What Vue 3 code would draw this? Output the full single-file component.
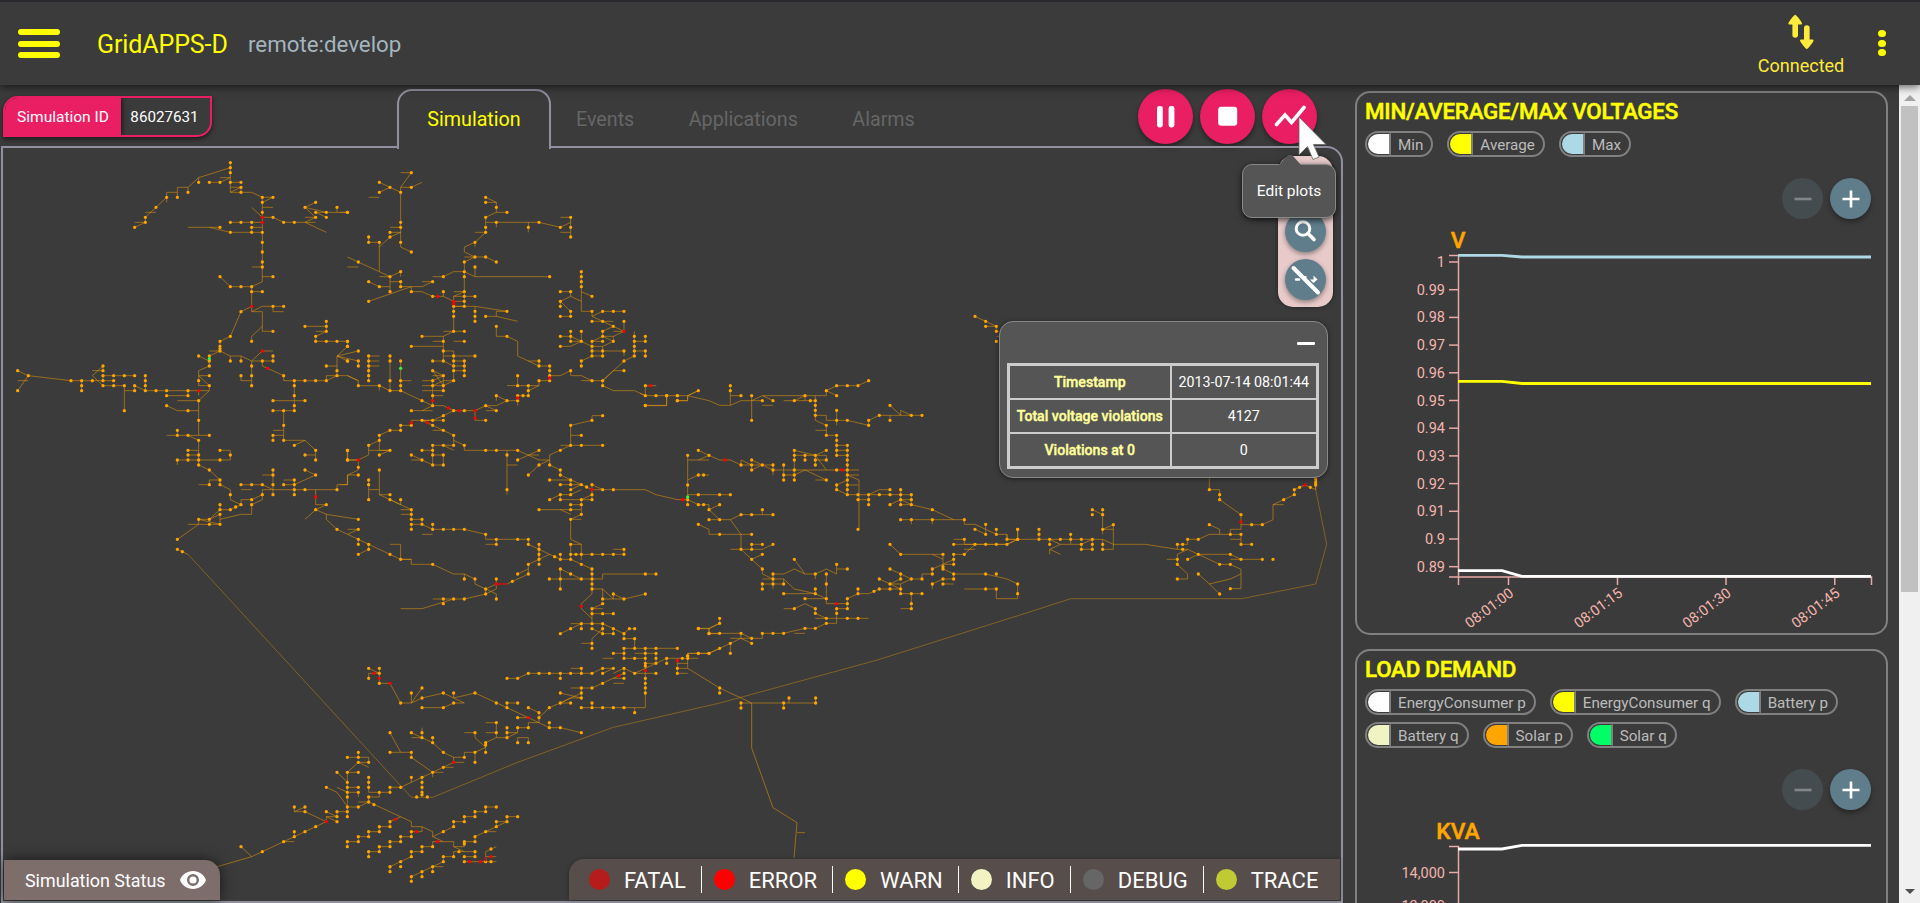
<script setup>
// Feeder topology. Each section has its own origin on the canvas and is stored at three units per pixel.
// "wires" is path data; node rows are written as "y:x,x,x".
const sections = [
  {
    id: 'west', x: 0, y: 140,
    wires: 'M691 68V157 M691 83L596 113V127 M596 113L564 142V157 M564 142H532V172 M532 157H500V187 M500 172L436 232V247L404 262 M436 217H468 M404 247H436 M628 127H660L691 113H660 M691 127H723 M691 157L723 142 M691 157H755L787 172V425 M691 142H723V157 M787 172H819L787 187 M787 202H819 M755 202L787 232H819L851 247H947 M691 247H787 M564 262H660 M628 262L691 277H787 M755 262H787 M755 262V277 M915 247L979 277 M915 202L947 187 M915 202L947 232L915 247 M915 202L979 217H1043 M947 217H979 M1011 202V217 M947 217L979 232 M915 232H947 M755 381H787 M787 410H819 M787 425L755 440H691L660 410 M755 440V515H787V574H819 M755 455H787 M755 515L787 499H851 M819 499V515H851 M755 499L723 515L691 589L660 604V633 M787 559L755 589V604 M628 633H660L691 648H723L755 663L787 633H819 M660 633L628 648V678L596 692V707L628 737V752 M596 648L628 663 M691 648V663 M723 648V663 M755 663V737 M755 663H819V648 M787 663V678L851 707V722H979L1011 707 M723 707V722H755 M596 722V707H628 M596 722V737H628 M596 752V767 M628 752L596 782V886 M53 692L85 707L53 752 M53 722H85 M85 707L213 722H341 M245 722V752 M309 678L277 707L309 737H373V812 M277 692H309V678 M309 707H404 M309 707V722 M373 752H404V737L436 752V707 M436 752H628 M500 767H564V752 M532 782H596 M500 797L532 812H596 M500 886H628 M532 871V886 M564 886L596 901V975 M564 931H596 M564 945H596 M532 975V960H691V931H660 M596 975L628 990L660 1020V1034L691 1049V1079L723 1094 M628 1020H660 M628 1020V1034H596 M723 1034H787L819 1049V990 M787 1005H819 M723 1049H755 M723 1094V1079H755L787 1064V1049H1011V1034H1043V1005L1075 990 M755 1094L787 1079V1064 M819 1049V1064 M851 1034H883V1064 M851 1020H883V1034L947 1005L915 990 M755 1094V1123H723L660 1138 M660 1094V1109H691L723 1094 M660 1109L628 1138 M596 1153V1138H628L660 1123 M564 1153H660V1123 M596 1153L532 1198 M596 1138L660 1153 M532 1228L547 1235L564 1243 M915 559H979V544 M947 574H979V559 M979 574L947 589V604H1043V619L1011 648V707H1043L1075 722 M979 678H1011 M979 722V707H1011 M819 782H915 M883 722V812H819 M851 812V901H915L947 931V960 M819 871H851 M819 901V886H851 M883 916L915 901 M915 945H947 M947 1049V1094H979 M947 1109L979 1094 M915 1138L947 1109L979 1123L1075 1138 M979 1123V1138L1011 1168L1075 1198 M1011 648L1075 633 M1011 648L1043 663 M1011 648L1075 663V678 M1043 1168H1075L1043 1183 M1043 931V960H1075',
    warn: '68:691;83:691;98:691;127:596,628,660,691,723;142:723;157:564,723;172:500,532,787,819;187:787,947;202:468,915,1011;217:787,947,979,1043;232:436,819,947,979;247:436,691,723,755,851,883;262:404,660,755;277:691,755,787;307:787;336:787;366:787;381:787;410:660,819;440:691,723,755;455:755,787;499:819,851;515:723;544:979;559:915,979;574:819,979;589:691,947;604:660,755,947,979,1011,1043;619:660,1043;626:660;633:660;648:596,628,819;663:628,691,723,787,819,1043;678:628,755,309,979;692:53,309,1011;707:85,309,341,373,404,436,628,723,755,851,1011;722:213,245,277,309,341,436,596,883,915,947,979;737:245,309,341,373,404,436,628,755,883;752:53,245,404,436,468,500,564;767:500,564,883;782:596,819,915;797:500,883;812:373,564,819,851,883;841:596;856:851;871:532;886:532,564,628,819;901:596,819,851;916:883;931:564,660,947,1043;945:564,596,691,915;960:532,564,596,660,947,1043;975:596;990:628,819,915;1005:819,947;1020:660,883;1034:628,660,723,755,787,819,851,883;1049:883,915,1011;1064:691,787,819,883;1079:755;1094:660,723,755,979;1101:707;1109:660,691,947;1123:660;1138:596,628;1153:628,660;1168:1011;1198:532;1228:532;1235:547',
    error: '232:787;247:787;499:755;633:787;685:803;752:596;1071:947',
    ok: '656:628'
  },
  {
    id: 'north', x: 340, y: 140,
    wires: 'M0 217H22 M182 98H214L182 142V321L214 336 M182 142H214L246 127 M118 127L182 157 M118 157L150 142 M86 172H118 M150 262H182 M150 277H182 M150 291L182 277 M118 321L150 291 M86 291V307H118V395L150 410V455 M22 351L118 395 M22 381H55 M118 410H150L182 395V410 M150 425H182V440H246L278 425H246 M86 425L118 440H150 M214 440V455H246L278 469H310V455 M86 484L214 440 M278 410H310L341 395H373 M310 469L341 484V574 M341 469H405 M341 484V469 M341 455H373 M341 469L373 455 M341 484H373V366 M341 499H405L501 514H469V529H437 M405 499V544 M341 499H373V484 M469 529L533 544 M437 172L469 187V217H501 M437 187H469 M469 217L437 232V277L405 307L373 321V336L405 351H373 M405 277H437 M437 247H597L661 262L692 247 M469 247V262 M565 247V277 M661 232H692V291 M661 277H692 M405 307V321 M373 366L405 351H437L469 366 M373 395L405 410H629 M405 381V410 M469 559V589H501L533 604V648L597 678 M565 663H597V678H629V722 M629 707H661L692 692V707H724L756 722 M724 722H788V737L820 752H884L916 767 M629 722H597V737L565 752V767H533 M501 737H597 M533 707V737 M533 767V797 M533 782H501L469 797H437L405 812V841H437 M501 782L469 767V782 M437 797L469 812H437 M565 737V752 M341 812H405 M278 797H310L341 812L310 827L278 841H214V856H182V871H150L118 886V931H150 M246 812L278 797 M214 812H278 M246 782L278 797V722L310 707H278 M182 752L246 782 M182 663V752H150V648 M182 722H214 M86 648V722 M86 648H118 M86 663H118 M86 678H118 M22 707L55 722V737H118V752 M118 737L150 752 M310 574H373 M246 589H310L341 574 M310 589V663 M278 604H310 M341 604H373 M214 619H310 M310 633H341V722L310 737 M310 648H341 M278 663H310L341 678H373V663 M341 648H405 M341 663H373V707 M341 692H373 M278 692L310 707V752 M278 692L310 737 M278 737L310 722H341 M246 722H278 M246 752H310 M278 767H310 M246 737H310 M246 841H310 M246 841L278 856L310 871L341 886V916H278V975H310V945 M278 871H310 M310 916L341 931 M341 901L373 916V931H533 M246 931H278 M214 945L246 960L278 975 M214 960H246 M278 945H310 M501 931V1064 M501 975H533 M533 931L597 960H629 M565 945H597 M533 960L597 931 M565 1005L597 975L629 960V975L661 990V1005L724 1034 M629 960V945L692 916V856L756 841V827H788 M692 886H724 M661 916H788 M118 945L150 931H86V916L118 901 M86 931V945L55 960V990 M22 931V960H55 M0 1034H22V1005H55 M629 1020H692V1034 M661 1034H692L724 1034 M724 1034L692 1049 M724 1034L756 1049V1079H661V1064H692L724 1049 M629 1079L661 1064 M756 1049V1034L788 1049H916L948 1064L1012 1079H1043 M756 1049H788 M724 1079L756 1064 M692 1094H724V1079 M597 1109H724 M661 1109L692 1123 M724 1094V1123L692 1138V1198L724 1213V1260 M692 1138H724 M692 1213H724 M692 1213V1260 M692 1243H852V1228H820 M118 990V1064L150 1079L182 1094V1079 M118 1064H150 M86 1020V1079 M86 1049H118 M150 1079L214 1109H182 M214 1109V1138H246V1153 M182 1123H214 M214 1168V1153H246L278 1168V1153 M278 1168H373L437 1183V1198H565V1213 M246 1183H278 M437 1213H469V1198 M565 1213L644 1250L661 1257 M597 1213V1260 M55 1198L86 1213L150 1243L182 1258H214 M55 1198V1213 M86 1213V1228L55 1243 M150 1213H182V1258 M724 395V514H756V529L788 514H852 M724 455L756 469 M661 455H692V469L661 484V499 M692 469L724 484 M661 484L692 514V529H661 M756 529L852 574L820 589H788 M756 544H820 M852 544V574H820 M788 574L820 559 M788 574V589L820 604V589 M756 604L788 589 M820 604L788 619V648 M661 589H692V574 M692 589L724 604V574 M692 604V589 M692 604H724 M661 619H692L724 604L756 619V604H788 M756 619V648H788 M756 619H788 M756 633H852V648 M724 663L756 648 M724 678V663 M883 574V648L852 663L788 722 M788 722L820 692H852 M883 604H916V589 M883 633H916V648 M916 767V737H949 M916 767H1043L1075 752 M980 767V797H916 M1012 782H1043V767',
    warn: '98:214;127:118;142:150,214;157:118,182;172:437;187:437;202:469;217:22,501;232:437,692;247:182,469,597;262:182,437,565,661,692;277:150,437;291:86,150,692;307:86,118,182,405;336:214;351:405,437;366:55,373,469;381:405;395:182,373,724;410:150,310,373,629,724;425:86,182,278,724;440:118,182,724;455:150,214,310,373,661,692;469:278,373,405,756;484:86,373,661;499:341,373,661;514:341,405,501,692,756,788,820,852;529:341,405,437,661,692;544:405,756,788,852;559:469,820;574:341,373,692,724,788;589:246,501,661,692,788,883,916;604:22,310,373,692,724,756,788,820,883,916;619:22,214,661,756,883;633:55,310,756,788,852,883,916;648:86,150,341,405,756,788,883,916;663:22,55,86,150,182,278,310,341,373,597,724,852;678:55,86,341,373,597,629,724;692:86,278,341,373,629,692,852;707:86,310,373,533,629;722:86,150,182,278,341,597,629,756,788;737:55,118,182,278,310,533,565,788,916;752:150,182,310,565;767:278,469,533,549,565,916,948,980,1012;782:246,501,533,1012;797:278,437,916;812:214,341,373,469;827:310,788;841:246,278,310,437,756;856:182,214,278,692;871:150,182,310;886:118,341,724;901:118;916:86,278,310,341,373,692,724,788;931:22,150,246,278,437,469,533,597,661;945:118,214,278,310,501;960:22,246,533;975:278,310,597,629;982:55;990:118,661;1005:55,565,661;1020:86,629,692;1034:86,661,692,724,756;1041:740;1049:501,692,788,820;1064:150,661,692,756;1079:86,150,182,629,661,724,756;1094:692,724;1109:214,597,692;1123:214,724;1138:55,214,246,692;1153:214,246,278;1168:55,214,278,310,341,373;1183:437;1198:55,469,533,565;1213:55,86,469,597,692,565;1228:86,597,852;1243:55,150,597,661,692,708,724,756,788,820,852;1250:644',
    error: '469:293;484:341;491:341;574:852;714:629;737:932;774:533;782:278;804:325;812:357,405;834:405;848:214,262;960:55;1049:756;1079:1028',
    ok: '685:182'
  },
  {
    id: 'center', x: 640, y: 360,
    wires: 'M0 100L16 107 M143 107V122 M16 136H80V107 M112 122H143 M143 107L207 122L239 136H271V77 M143 107L175 92 M271 107H303 M271 136L303 122H367 M335 107V181 M335 122L367 107H559V92L590 77H654L686 62 M367 107L399 122 M367 136H399 M431 122H526 M463 122L495 107V122 M559 92L590 107 M526 107V181L559 196V226H590 M526 166H559V181H622L686 196V181L718 166H846 M590 151V196 M526 211H559 M750 136L782 166V151L814 166 M750 166V181 M590 226V286H622 M590 256H622V404 M590 271H622 M143 286V434 M143 300H207 M175 271L207 286L239 300H271L303 315V300 M175 300L207 286 M143 360L175 345H207 M303 315H399V330H590 M303 300L335 315 M335 300L367 315L335 330V315 M367 315L399 330V345 M431 315V360 M431 345H463 M463 271V360 M463 271L526 286H559V300 M463 286H526V300H559 M495 286V300 M526 286L559 271 M526 286L559 330 M526 315V300 M463 345L495 330L559 360H526 M590 330H657 M622 345L657 360V508 M622 345H657 M590 375L622 360 M622 375H654 M590 375V389L622 404H814V434 M686 404L718 389H750 M782 389V434H814 M654 419H686V404 M686 419V434 M750 434L782 419H814 M814 434L877 449L941 479 M782 419L814 434 M782 479H973V493H1005L1069 523H1101V538H1133V508 M814 479V493 M877 479V493 M1005 508L1037 523V493 M1069 508V523 M941 538H973V553 M941 553H1101L1133 538 M1005 553L973 583H941V613H909 M973 568H1005 M143 404H271 M143 419L175 434H207V449L239 434 M207 449L239 479H207 M239 479H271L303 464H399 M367 449V464 M271 479L303 523V568L335 598L367 583 M175 493L207 508V523H335 M271 568H367L399 553 M335 568V553H367 M335 598L367 627V642L399 657H431L463 687L526 701H431 M399 642H431L463 627L495 642H526V657 M463 598L495 642 M526 642L559 627L590 642V613 M590 627H622 M367 657H399 M399 642V687 M367 687V672H431V657 M559 642V731H622V716L654 701H686L718 687H782V701H846 M526 687V701L559 716H495 M654 687V701 M590 746H622V731 M590 746V790H559L526 805H495L431 820H367V835H271 M431 746H463L495 731L526 746V760L559 775 M526 775H686 M463 820H495 M750 553L782 583H909V627L941 642H1037L1101 657L1133 672V716H1069V687H973 M877 583L909 598 M909 613L941 598 M846 657V642H877V627L909 613 M750 627L782 642V657L750 672L718 657 M750 672H782L814 657H846 M750 672L782 687V672 M782 642L814 657 M877 687V672L909 657H941V642 M909 672H941 M814 701V746H782 M175 805H207V820H303V835 M207 805L239 790V775 M303 820L335 835 M303 835L335 850 M303 835L271 850V880 M271 850L207 880H143V900',
    warn: '62:686;77:271,590,622,654;92:175,271,559;107:80,112,303,335,495,590;122:112,367,399,463,511,526;136:16,526,750;151:526,590;166:526,718,814,846;181:335,590,622,686,750;196:559,686;226:559,590;241:590;256:590,622;271:175,463,559,590,622;286:143,207,463,495,526,590,622;300:335,463,495,526,559,622;315:303,335,367,399,431,526,622;330:335,399,463,590,622;345:175,191,431,463,622;360:431,463,559,622;375:143,590,622;389:590,622,750,782;404:175,239,271,622,654,686,718,750,782,814;419:143,654,686,782,814;434:143,175,191,239,686,750,782,814;449:207,367,877;464:303,335,399;479:207,239,782,814,877,973;493:175,1037;508:654,1005,1069,1133;523:239,335,1037,1069;538:973,1101,1133;553:335,367,399,750,941,1005,1037,1069,1101;568:303,335;583:367,782,909,941,973;598:335,463,941;613:590,941;620:909;627:367,622,750,877,909;642:399,526,559,782,877,941,1037,1069;657:399,718,782,814,846,909,941;672:367,399,431,559,750,877,909,1133;687:367,526,654,718,750,782,1037,1069;694:702;701:431,526,654,782,814,846,1133;716:495,559,622;731:622,814;746:463,526,590,622,814;760:526,590;775:239,559,622,654;790:239,559;805:175,495,526;820:207,239,303,367,399,431;835:335;850:271,335;865:239;880:175,207,271;888:143',
    error: '300:255;330:606;419:127;731:590',
    ok: '411:143'
  },
  {
    id: 'east', x: 960, y: 460,
    wires: 'M141 238V223 M141 238H173 M13 253H141L173 238H428L460 253H556L652 268 M173 208V238 M237 208V238 M332 223V253 M269 238V253 M269 238L301 253L269 268V283 M269 268L301 283 M301 253H364L397 238V268H364V253 M397 149L428 164V149 M428 164V223 M428 208L460 194V268H428V238 M428 208H460 M748 55V89H779V119L843 164V208H811V223H843 M843 194H907L939 179V134H971 M939 134L1003 104V89L1035 75L1067 89V57 M748 194L779 208V223H811 M779 223H748L715 238H683V253H652V268H683L779 313H811L843 328V386H811 M843 342L811 357L748 372L715 342 M748 372L779 402 M811 238H843V223 M843 238V253H875 M652 298V283L683 268 M620 298H652V313L683 342V357H652 M683 298L715 283H811L843 298H907 M811 298H843',
    warn: '57:1067;64:1067;69:1067;75:1067;82:1019,1051;89:748,1003;104:779,1003;119:779,971;149:397,428;164:397,428,843;194:460,748,875,907;208:173,237,428;223:237,332,811,843;238:173,237,269,301,332,364,397,683,715;253:269,364,397,428,652,668,843,875;268:364,397,428,668;283:715,811;298:652,683,843,907,939;313:652,779,811;342:715;357:652;386:811;402:779',
    error: '75:1035;186:843', ok: ''
  },
  {
    id: 'spur', x: 960, y: 140,
    wires: 'M45 529L109 559V574H117 M77 559H109 M109 589H117',
    warn: '529:45;544:77;559:77,109;574:109;604:109', error: '', ok: ''
  },
  {
    id: 'south', x: 340, y: 540,
    wires: 'M661 43V58 M661 58H692 M692 58L756 87V162L724 191V206L756 236 M756 206V251 M597 13V73 M182 58H214V73H278L341 102H373V117 M373 102L405 117V132L437 147L469 162V177 M437 162L469 147V117 M437 147V162L373 177H278 M341 177L246 206H182 M437 147L469 132 M501 132L565 102V73L597 58L629 43 M533 102L565 87 M661 87V147 M661 87L724 117 M628 117H788V102H948 M756 147H788L820 177V162L852 177L916 162 M788 147V177H852 M788 191L756 206H788 M756 221H820 M661 281L724 251H788L788 266L756 296V325 M692 251H724V266 M724 310H756 M756 266L788 281H820V266L788 251 M820 266L852 281L868 266H884 M788 266V281 M852 281V296H884V325 M852 325H1012 M820 340H852V325 M852 340V355H916 M884 340H948V370H916 M788 355H820 M916 385L980 355H1043 M980 355V370 M1012 355V400H1043 M1012 370H1043 M1012 385H1043 M1043 340V385L1139 444 M1043 340H1107L1139 325 M1043 355H1075 M1075 266H1107V281H1139 M1107 266L1139 250 M501 415H533L565 400H756L788 385H820L788 400 M692 385H724V400 M661 400V415 M820 400L852 385L884 400H948 M852 385V400 M597 548V533L628 503L661 489L692 474H724V444H756L852 400 M820 415H852 M820 430H852 M692 444H724 M724 459L661 489H692 M724 474L661 459 M916 325V503H724 M884 400L916 385 M756 489V503 M884 503V518 M86 385L118 400V385 M86 415V400H118V430H150L182 489H214V459 M214 489L246 444 M214 489L246 474L310 459L341 474L405 459L501 503L565 533L628 563H661L724 578 M341 459V474L373 489H341L310 503H246 M501 503V489H533 M565 503L597 518V533 M533 533H565 M565 548H597 M628 563V548 M437 548H469V593L437 608V637 M437 578H469 M469 593H501V563 M501 578H533V563H565V548 M501 593L533 578 M533 608V593H565V608 M373 578H405V593L437 622L405 637V667 M405 637H373V652H341V667L278 697 M341 667H373 M246 563V593H214 M214 578L278 608L310 637L341 652 M278 593V608 M150 578L182 637 M150 637H214V652L278 697V712 M278 697H310 M310 682H341 M278 697L182 742H150V757H86 M214 712V727 M246 712V771 M118 757V771H86V786H55 M22 697H55 M86 712V757 M22 697V830 M55 667L22 697 M55 637V652 M22 652H86V667H55L86 682 M22 742H55 M22 757H55V771 M22 801H55L86 786L214 845V860H246V875 M246 860L278 875V890L310 905H341V920L373 935 M22 920V905H55V890H86V875H118V860H150V845L182 830 M86 950V935H118V920H150V905H182V890H214V875H246 M150 995V980L214 950V935H246V920H278V905H310 M278 890L341 860V845H373V830H405V815H437V801H469 M214 1024V1010L310 965V950H341V935H405V950H373 M246 1010V995 M278 995V980H310 M341 920H373V905H405V890L501 845V830H533 M469 860V845H501 M437 875H469 M373 965H469 M437 965V935L469 920 M437 950H469',
    warn: '58:182,597,661,692;73:278,565,597,724;87:661,756;102:533,565,692,756,916,948;117:373,405,469,628,661,724,756;124:517;132:756;147:437,661,756;162:437,820,916;177:310,341,373,469,788,852;191:310,788;206:756;221:756,788,820;251:724,756,788;266:692,724,756,788,820,868,884,1075;281:661,788,820,852,1107;296:852,884;310:756;325:756,852,884,916,948,1012;340:820,852,916,948,1075,1107;348:1043;355:852,884,916,948,980,1027,1043;370:916,948,980;378:916;385:86,118,724,788,820,852,1012;400:118,565,597,628,661,692,724,756,788,852,884,948,1012;415:86,501,533,661,852,916;430:118,788,916;444:246,724,756,916;459:214,310,341,405,661,724,916;474:246,724;489:182,341,469,501,533,661,692,756;503:246,310,501,565,628,724,756,788,820,852;518:597,884;533:533,597;548:469,628;563:501,533,565,628,661;578:150,214,246,405,469,501,724;593:246,278,501;608:278,437,533,565;615:437;637:55,150,214,310,405,437;652:22,55,214,373;667:55,86,405;682:310;697:22,55,278;712:86,214,246;727:22,86,246;742:22,55,86,150,182,246;757:22,55,118,150,246;764:246;771:22,86,230,262;786:86;794:102;801:22,55,437,469;815:22,405,437;830:22,373,405,501,533;845:150,341,373,469,501;860:118,150,341,469;875:86,118,214,310,437;890:55,86,182,214,405;905:22,55,150,182,373,405;912:373;920:22,118,150,246,278;927:453;935:86,118,214,246,357,405;950:86,214,310,341,373,405;965:182,310,373,437,453;980:150,182,278;995:150,246,278;1010:214,246;1024:214',
    error: '132:469;199:724;362:1012;392:916;400:102;407:836;415:118;430:150;533:565;667:341;838:166;875:230;905:293;950:453;965:389,421', ok: ''
  },
  {
    id: 'southwest', x: 0, y: 540,
    wires: 'M1011 697L1043 727 M979 742L1011 757L1043 801 M1011 742L1043 757 M1011 830V815H1043 M979 815L1011 830H979V845L755 950L565 1005 M755 950L723 920 M979 845L915 815H883V801 M883 815L915 801 M883 875V890 M851 905H883 M979 830L1011 845',
    warn: '697:1011;742:979;801:883,915;815:915,979,1011;830:1011;845:1011;860:947;875:883,915;890:883;905:851;920:723;935:787',
    error: '845:979', ok: ''
  },
  {
    id: 'southeast', x: 700, y: 660,
    wires: 'M59 84L123 114L155 129V264L219 443L291 488L282 594 M59 84V99 M123 129H347V114 M123 144V129 M251 129V144 M267 114V129 M291 518H315',
    warn: '84:59;99:59;129:123,251,347;144:123,251;114:267,347', error: '', ok: ''
  }
]
const trunk = 'M188 554.3L411.3 797.3M432.7 797.3L517.7 762.3L613.3 727.3L720 703L877.3 660L1020 615L1070.7 598.7H1241.7L1315.7 584L1326.7 544.3L1315.7 489.7V479 M411.3 797.3H432.7'

function dots(rows) {
  if (!rows) return ''
  return rows.split(';').map(row => {
    const [y, xs] = row.split(':')
    return xs.split(',').map(x => `M${x} ${y}h.01`).join('')
  }).join('')
}

const levels = [
  { name: 'FATAL', color: '#b71c1c' }, { name: 'ERROR', color: '#ff0000' },
  { name: 'WARN', color: '#ffff00' }, { name: 'INFO', color: '#f0f4c3' },
  { name: 'DEBUG', color: '#666666' }, { name: 'TRACE', color: '#c0ca33' }
]
const tabs = ['Events', 'Applications', 'Alarms']
const plots = [
  {
    title: 'MIN/AVERAGE/MAX VOLTAGES', unit: 'V', height: 544,
    series: [{ name: 'Min', color: '#ffffff' }, { name: 'Average', color: '#ffff00' }, { name: 'Max', color: '#add8e6' }],
    ticks: ['1', '0.99', '0.98', '0.97', '0.96', '0.95', '0.94', '0.93', '0.92', '0.91', '0.9', '0.89'].map((label, i) => ({ label, y: 38 + i * 27.7 })),
    bottom: 353,
    times: [{ label: '08:01:00', x: 151.5 }, { label: '08:01:15', x: 260.5 }, { label: '08:01:30', x: 369 }, { label: '08:01:45', x: 477.8 }],
    lines: [
      { color: '#add8e6', d: 'M101 31.3H145L165 33H514' },
      { color: '#ffff00', d: 'M101 157.3H145L165 159.5H514' },
      { color: '#ffffff', d: 'M101 346.7H145L165 352.3H514' }
    ]
  },
  {
    title: 'LOAD DEMAND', unit: 'KVA', height: 544,
    series: [{ name: 'EnergyConsumer p', color: '#ffffff' }, { name: 'EnergyConsumer q', color: '#ffff00' }, { name: 'Battery p', color: '#add8e6' }, { name: 'Battery q', color: '#f0f4c3' }, { name: 'Solar p', color: '#ffa500' }, { name: 'Solar q', color: '#00ff66' }],
    ticks: [{ label: '14,000', y: 57.5 }, { label: '13,000', y: 91 }],
    bottom: 353, times: [],
    lines: [{ color: '#ffffff', d: 'M101 34H145L165 30.4H514' }]
  }
]
</script>

<template>
  <div class="app">
    <header class="header">
      <div class="burger"><i></i><i></i><i></i></div>
      <div class="brand">GridAPPS-D</div>
      <div class="host">remote:develop</div>
      <div class="connection">
        <svg width="26" height="36" viewBox="0 0 26 36">
          <path d="M7.2 7V21M18.8 14V28" stroke="#ffeb3b" stroke-width="5.6" stroke-linecap="round" />
          <path d="M7.2 0.8C8.2 0.8 14 8 14 9.4C14 10.3 13.4 10.6 12.6 10.6H1.8C1 10.6 0.4 10.3 0.4 9.4C0.4 8 6.2 0.8 7.2 0.8ZM18.8 35.2C19.8 35.2 25.6 28 25.6 26.6C25.6 25.7 25 25.4 24.2 25.4H13.4C12.6 25.4 12 25.7 12 26.6C12 28 17.8 35.2 18.8 35.2Z" fill="#ffeb3b" />
        </svg>
        <span>Connected</span>
      </div>
      <div class="dots"><i></i><i></i><i></i></div>
    </header>

    <main class="body">
      <section class="left">
        <div class="bar">
          <div class="simid"><b>Simulation ID</b><span>86027631</span></div>
          <nav class="tabs">
            <div class="tab active">Simulation</div>
            <div v-for="t in tabs" :key="t" class="tab">{{ t }}</div>
          </nav>
          <div class="controls">
            <button class="fab"><svg width="24" height="24" viewBox="0 0 24 24"><rect x="3" y="1" width="5.8" height="21.5" rx="2.4" fill="#fff" /><rect x="14.6" y="1" width="5.8" height="21.5" rx="2.4" fill="#fff" /></svg></button>
            <button class="fab"><svg width="24" height="24" viewBox="0 0 24 24"><rect x="2.2" y="1.8" width="19" height="19" rx="3" fill="#fff" /></svg></button>
            <button class="fab"><svg width="34" height="24" viewBox="0 0 34 24"><path d="M3.5 19.5L12 10L18.5 17.5L31 2.5" fill="none" stroke="#fff" stroke-width="3.6" stroke-linecap="round" stroke-linejoin="miter" /></svg></button>
          </div>
        </div>

        <div class="stage">
          <svg class="network" width="1339" height="753" viewBox="3 148 1339 753">
            <path class="wire" :d="trunk" />
            <g v-for="s in sections" :key="s.id" :transform="`translate(${s.x} ${s.y}) scale(.33333)`">
              <path class="wire thick" :d="s.wires" />
              <path class="node" :d="dots(s.warn)" stroke="#ffa500" />
              <path class="node" :d="dots(s.error)" stroke="#ff0000" />
              <path class="node" :d="dots(s.ok)" stroke="#3cf03c" />
            </g>
            <path d="M496.3 584H507.5M485.7 861.5V857" stroke="#d01010" stroke-width="1.6" />
          </svg>

          <div class="toolbox">
            <span class="tool"><svg width="41" height="41" viewBox="0 0 41 41"><circle cx="18" cy="17.5" r="6.8" fill="none" stroke="#fff" stroke-width="3" /><path d="M23 22.5L29 28.5" stroke="#fff" stroke-width="3.6" stroke-linecap="round" /></svg></span>
            <span class="tool"><svg width="41" height="41" viewBox="0 0 41 41"><path d="M11 20.500H14M18 18.300H20.500" stroke="#fff" stroke-width="2.400" stroke-linecap="round" /><path d="M28.500 16.500L32.500 20.500L28.500 24L25 20.500H28.500Z" fill="#fff" /><path d="M8.500 9L33 33.500" stroke="#fff" stroke-width="4" stroke-linecap="round" /></svg></span>
          </div>

          <div class="tooltip">Edit plots
            <svg class="caret" width="24" height="13" viewBox="0 0 24 13"><path d="M0 11.5C3 10 7 3 10 1.2Q12 .2 14 1.2C17 3 21 10 24 11.5V13H0Z" fill="#555" /></svg>
          </div>

          <div class="info">
            <div class="min"></div>
            <table>
              <tbody>
                <tr><th>Timestamp</th><td>2013-07-14 08:01:44</td></tr>
                <tr><th>Total voltage violations</th><td>4127</td></tr>
                <tr><th>Violations at 0</th><td>0</td></tr>
              </tbody>
            </table>
          </div>

          <div class="status">Simulation Status
            <svg width="26" height="18" viewBox="0 0 26 18"><path fill-rule="evenodd" d="M13 0C7 0 2 3.7 0 9c2 5.300 7 9 13 9s11-3.700 13-9C24 3.700 19 0 13 0zm0 15a6 6 0 1 1 0-12 6 6 0 0 1 0 12z" fill="#fff" /><circle cx="13" cy="9" r="3.600" fill="#fff" /></svg>
          </div>
          <div class="legend">
            <div v-for="l in levels" :key="l.name" class="level"><i :style="{ background: l.color }"></i><span>{{ l.name }}</span></div>
          </div>
        </div>

        <svg class="cursor" width="32" height="46" viewBox="0 0 32 46"><path d="M1 1V39L9.500 30.500L15 43.500L21 41L15.500 28.500H28Z" fill="#fff" stroke="#666" stroke-width=".8" /></svg>
      </section>

      <aside class="plots">
        <article v-for="p in plots" :key="p.title" class="card" :style="{ height: p.height + 'px' }">
          <h2>{{ p.title }}</h2>
          <div class="series">
            <span v-for="s in p.series" :key="s.name" class="pill"><i :style="{ background: s.color }"></i><em>{{ s.name }}</em></span>
          </div>
          <div class="zoomers">
            <span class="round off"><svg width="20" height="20"><path d="M1.500 10H18.500" stroke="#80868a" stroke-width="2.600" /></svg></span>
            <span class="round"><svg width="20" height="20"><path d="M1.500 10H18.500M10 1.500V18.500" stroke="#fff" stroke-width="2.600" /></svg></span>
          </div>
          <svg class="chart" width="520" height="410" viewBox="0 0 520 410">
            <text class="unit" x="101" y="24" text-anchor="middle">{{ p.unit }}</text>
            <path class="axis" :d="`M92 31.500H101.500V${p.bottom}H92M101.500 ${p.bottom}H514.500V${p.bottom + 8}M101.500 ${p.bottom}v8`" />
            <g v-for="t in p.ticks" :key="t.label">
              <path class="axis" :d="`M92 ${t.y}H101`" />
              <text class="lbl" x="88" :y="t.y + 5" text-anchor="end">{{ t.label }}</text>
            </g>
            <g v-for="t in p.times" :key="t.label">
              <path class="axis" :d="`M${t.x} ${p.bottom}v8`" />
              <text class="lbl" text-anchor="end" :transform="`translate(${t.x + 6} ${p.bottom + 18}) rotate(-37)`">{{ t.label }}</text>
            </g>
            <path v-for="l in p.lines" :key="l.d" :d="l.d" fill="none" :stroke="l.color" stroke-width="2.800" />
          </svg>
        </article>
      </aside>
      <div class="scroll"><i class="up"></i><div class="thumb"></div><i class="down"></i></div>
    </main>
  </div>
</template>

<style>
body { background: #3b3b3b; overflow: hidden; }
</style>

<style scoped>
* { box-sizing: border-box; }
.app { width: 1920px; height: 903px; overflow: hidden; background: #3b3b3b; font-family: Roboto, "Liberation Sans", sans-serif; color: #fff; display: flex; flex-direction: column; }
.header { height: 85px; flex: none; border-top: 2px solid #29292e; display: flex; align-items: center; position: relative; z-index: 5; background: #3b3b3b; box-shadow: 0 2px 8px rgba(0, 0, 0, .6); }
.burger { width: 42px; margin: 0 0 0 18px; display: flex; flex-direction: column; gap: 5.500px; }
.burger i { height: 6px; border-radius: 3px; background: #ff0; }
.brand { margin: 2px 0 0 37px; width: 151px; font-size: 25px; color: #ff0; letter-spacing: -.1px; white-space: nowrap; }
.host { margin-top: 1px; font-size: 22.300px; color: #a5b5bf; }
.connection { margin: 3px 0 0 auto; width: 86px; display: flex; flex-direction: column; align-items: center; color: #ffeb3b; font-size: 18px; line-height: 21px; gap: 5px; }
.dots { margin: -1px 34px 0 34px; width: 8px; display: flex; flex-direction: column; gap: 2.500px; }
.dots i { width: 7.500px; height: 7px; border-radius: 50%; background: #ff0; }
.body { flex: 1; min-height: 0; display: flex; }
.left { width: 1344px; display: flex; flex-direction: column; position: relative; }
.bar { height: 61px; flex: none; display: flex; position: relative; }
.simid { margin: 11px 0 0 3px; width: 209px; height: 41px; border: 2px solid #e91e63; border-radius: 15px 0 15px 0; display: flex; line-height: 39px; font-size: 15.500px; box-shadow: 0 2px 5px rgba(0, 0, 0, .6); overflow: hidden; }
.simid b { font-weight: 400; width: 116px; text-align: center; background: #e91e63; box-shadow: 1px 0 5px rgba(0, 0, 0, .7); }
.simid span { flex: 1; text-align: center; font-size: 15.200px; padding-right: 2px; }
.tabs { display: flex; align-items: flex-start; margin: 4px 0 0 185px; font-size: 19.700px; color: #666; }
.tab { height: 60px; line-height: 61px; padding-right: 54.500px; }
.tab.active { width: 154px; padding: 0; text-align: center; line-height: 58px; border: 2px solid #9090a0; border-bottom: 0; border-radius: 15px 15px 0 0; color: #ff0; background: #3b3b3b; margin-right: 25px; z-index: 2; }
.controls { margin-left: auto; padding: 4px 27px 0 0; display: flex; gap: 7px; }
.fab { width: 55px; height: 55px; border: 0; border-radius: 50%; background: #e91e63; display: flex; align-items: center; justify-content: center; padding: 0; box-shadow: 0 3px 5px rgba(0, 0, 0, .4); }
.stage { margin: 0 1px; flex: 1; min-height: 0; border: 2px solid #9090a0; border-radius: 0 16px 0 0; position: relative; }
.network { display: block; }
.wire { fill: none; stroke: #ffa500; stroke-opacity: .36; stroke-width: 1; }
.thick { stroke-width: 3; stroke-opacity: .48; }
.node { fill: none; stroke-width: 10; stroke-linecap: round; }
.toolbox { position: absolute; left: 1275px; top: 8px; width: 55px; height: 151px; border-radius: 15px; background: #e8caca; display: flex; flex-direction: column; justify-content: flex-end; align-items: center; gap: 7px; padding-bottom: 7px; box-shadow: 0 0 4px rgba(0, 0, 0, .5); }
.tool { width: 41px; height: 41px; border-radius: 50%; background: #607d8b; box-shadow: 0 2px 5px rgba(0, 0, 0, .4); }
.tool svg { display: block; }
.tooltip { position: absolute; left: 1239px; top: 16px; width: 94px; height: 54px; border: 1px solid #888; border-radius: 10px; background: #555; text-align: center; line-height: 52px; font-size: 15.500px; box-shadow: 0 2px 6px rgba(0, 0, 0, .7); }
.caret { position: absolute; left: 35px; top: -11px; }
.info { position: absolute; left: 996px; top: 173px; width: 329px; height: 157px; border: 1px solid #888; border-radius: 14px; background: #555; padding: 20px 7px 0; box-shadow: 0 1px 5px rgba(0, 0, 0, .5); }
.min { width: 18px; height: 2.500px; border-radius: 1px; background: #fff; margin: 0 5px 18.500px auto; }
table { width: 312px; height: 106px; border-collapse: collapse; border: 3px solid #ccc; font-size: 14.250px; table-layout: fixed; }
th, td { border: 2px solid #ccc; padding: 0; text-align: center; white-space: nowrap; font-weight: 400; }
th { width: 162px; color: #ffff9c; font-weight: 500; font-size: 14.100px; -webkit-text-stroke: .4px #ffff9c; }
.status { position: absolute; left: 1px; bottom: 1px; width: 216px; height: 40px; border-radius: 0 15px 0 0; background: #7d6d6b; display: flex; align-items: center; justify-content: space-between; padding: 0 14px 0 21px; font-size: 17.900px; box-shadow: 0 0 14px rgba(0, 0, 0, .6); }
.legend { position: absolute; right: 1px; bottom: 1px; width: 771px; height: 41px; border-radius: 15px 0 0 0; background: #574d4b; display: flex; align-items: center; padding-left: 20px; font-size: 22px; box-shadow: 0 0 4px rgba(0, 0, 0, .3); }
.level { display: flex; align-items: center; height: 27px; padding-right: 15px; margin-right: 12px; border-right: 1px solid #fff; }
.level span { padding-top: 2px; }
.level:last-child { border: 0; margin: 0; }
.level i { width: 21px; height: 21px; border-radius: 50%; margin-right: 14px; }
.cursor { position: absolute; left: 1298px; top: 31px; }
.plots { width: 544px; margin-left: 11px; padding-top: 6px; display: flex; flex-direction: column; gap: 14px; overflow: hidden; }
.card { flex: none; width: 533px; border: 2px solid #808080; border-radius: 15px; padding: 5px 8px 0; display: flex; flex-direction: column; }
h2 { flex: none; margin: 0; font-size: 22.300px; line-height: 26px; height: 33px; font-weight: 500; color: #ff0; -webkit-text-stroke: .5px #ff0; letter-spacing: -.2px; white-space: nowrap; }
.series { flex: none; display: flex; flex-wrap: wrap; gap: 7px 14px; }
.pill { height: 26px; border: 2px solid #808080; border-radius: 13px; display: flex; overflow: hidden; font-size: 15.200px; line-height: 24px; color: #bbb; }
.pill i { width: 24px; border: 1px solid #3b3b3b; border-right: 2px solid #808080; border-radius: 12px 0 0 12px; }
.pill em { font-style: normal; padding: 0 8px 0 7px; }
.zoomers { display: flex; justify-content: flex-end; gap: 7px; margin: 21px 7px 0 0; height: 41px; flex: none; }
.round { width: 41px; height: 41px; border-radius: 50%; background: #607d8b; display: flex; align-items: center; justify-content: center; box-shadow: 0 3px 5px rgba(0, 0, 0, .35); }
.off { background: #454c50; box-shadow: none; }
.chart { flex: none; margin: 5px 0 0 -8px; }
.unit { font-size: 22.800px; font-weight: 500; fill: #ffa500; stroke: #ffa500; stroke-width: .5px; }
.axis { fill: none; stroke: #e8a9a5; stroke-width: 1.500; }
.lbl { font-size: 14.500px; fill: #f4b4ae; }
.scroll { width: 21px; background: #f0f0f0; display: flex; flex-direction: column; align-items: center; justify-content: space-between; padding: 10px 0 9px; }
.thumb { width: 17px; height: 486px; background: #c1c1c1; margin: 5px 0 auto; }
.up { border: 6px solid transparent; border-top: 0; border-bottom-color: #a3a3a3; }
.down { border: 5px solid transparent; border-bottom: 0; border-top-color: #505050; }
</style>
